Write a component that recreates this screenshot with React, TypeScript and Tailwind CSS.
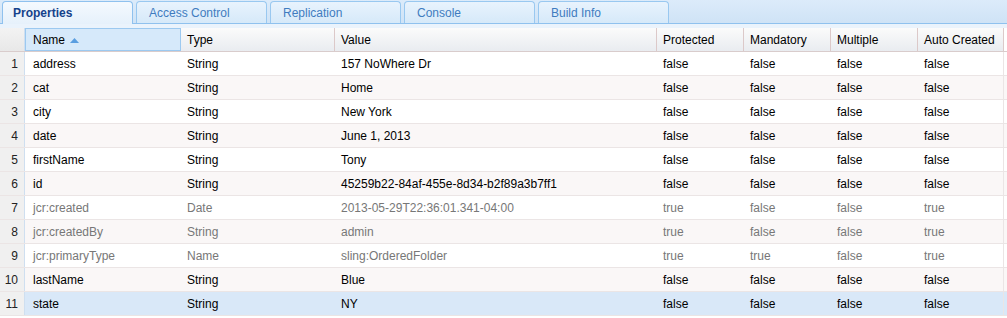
import React from "react";

const tabs = ["Properties", "Access Control", "Replication", "Console", "Build Info"];

const columns = ["Name", "Type", "Value", "Protected", "Mandatory", "Multiple", "Auto Created"];

const rows = [
  ["address", "String", "157 NoWhere Dr", "false", "false", "false", "false"],
  ["cat", "String", "Home", "false", "false", "false", "false"],
  ["city", "String", "New York", "false", "false", "false", "false"],
  ["date", "String", "June 1, 2013", "false", "false", "false", "false"],
  ["firstName", "String", "Tony", "false", "false", "false", "false"],
  ["id", "String", "45259b22-84af-455e-8d34-b2f89a3b7ff1", "false", "false", "false", "false"],
  ["jcr:created", "Date", "2013-05-29T22:36:01.341-04:00", "true", "false", "false", "true"],
  ["jcr:createdBy", "String", "admin", "true", "false", "false", "true"],
  ["jcr:primaryType", "Name", "sling:OrderedFolder", "true", "true", "false", "true"],
  ["lastName", "String", "Blue", "false", "false", "false", "false"],
  ["state", "String", "NY", "false", "false", "false", "false"],
];

const grid = "grid grid-cols-[25px_156px_154px_322px_87px_87px_87px_86px]";

export default function App() {
  return (
    <div className="w-[1007px] h-[318px] overflow-hidden bg-white text-[12px] text-black" style={{ fontFamily: '"Liberation Sans", Arial, sans-serif' }}>
      {/* Tab strip */}
      <div className="h-[24px] flex items-end gap-[3px] pl-[2px] bg-gradient-to-b from-[#dcebfa] to-[#cfe3f6] border-b border-[#8fc1ee]">
        {tabs.map((t, i) => (
          <div
            key={t}
            className={
              i === 0
                ? "w-[131px] h-[23px] -mb-px flex items-center pl-[10px] rounded-t-[4px] border border-b-0 border-[#8fc1ee] bg-gradient-to-b from-[#f4f9fe] to-[#e6f1fb] font-bold text-[#15428b]"
                : "w-[131px] h-[22px] flex items-center pl-[12px] rounded-t-[4px] border border-b-0 border-[#99c8f0] bg-gradient-to-b from-[#e8f3fd] to-[#d6e9f9] text-[#3f7cbf]"
            }
          >
            {t}
          </div>
        ))}
      </div>
      <div className="h-[4px] bg-[#eaf3fc]" />

      {/* Header */}
      <div className={`${grid} h-[24px] border-b border-[#d9cccc]`}>
        <div className="bg-gradient-to-b from-[#f3f3f3] to-[#e8e8e8] border-r border-[#cfdff0]" />
        {columns.map((c, i) => (
          <div
            key={c}
            className={
              i === 0
                ? "flex items-center pl-[7px] bg-[#d6e9fa] border border-[#9cc9f0]"
                : "flex items-center pl-[6px] bg-gradient-to-b from-[#fbfbfb] to-[#e9ecf0] border-r border-[#dcc9c9]"
            }
          >
            {c}
            {i === 0 && (
              <svg width="9" height="5" viewBox="0 0 9 5" className="ml-[5px] mt-[1px]">
                <path d="M0 5 L4.5 0 L9 5 Z" fill="#5a9ee0" />
              </svg>
            )}
          </div>
        ))}
      </div>

      {/* Rows */}
      {rows.map((r, idx) => {
        const selected = idx === rows.length - 1;
        const grey = r[0].startsWith("jcr:");
        const bg = selected ? "bg-[#d9e8f8]" : idx % 2 === 1 ? "bg-[#faf7f7]" : "bg-white";
        return (
          <div key={idx} className={`${grid} h-[24px] ${bg} border-b border-[#ebe5e5]`}>
            <div className="flex items-center justify-end pr-[6px] bg-[#f0f0f0] border-r border-[#cfdff0] text-[#222]">
              {idx + 1}
            </div>
            {r.map((v, j) => (
              <div
                key={j}
                className={`flex items-center pt-px ${j === 0 ? "pl-[8px]" : "pl-[6px]"} ${grey ? "text-[#777777]" : ""} ${j === 6 ? "border-r border-[#ebe5e5]" : ""}`}
              >
                {v}
              </div>
            ))}
          </div>
        );
      })}
    </div>
  );
}
